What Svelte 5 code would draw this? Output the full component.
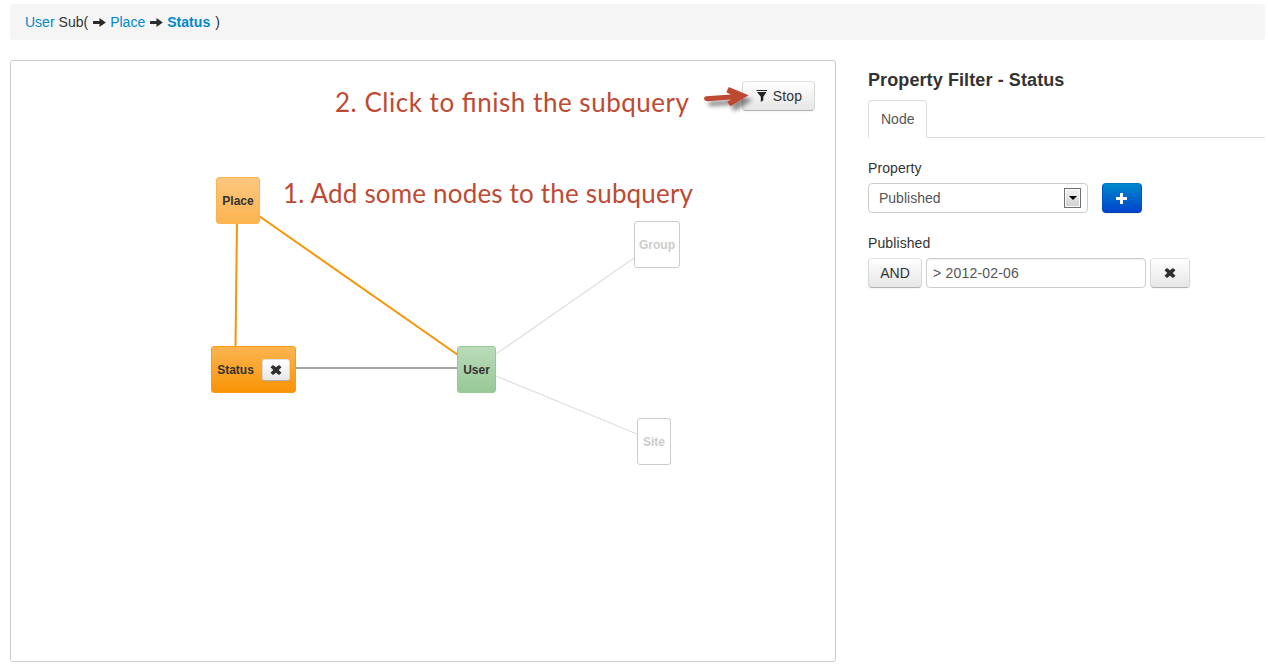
<script>
  const nodes = [
    { id: 'Place', kind: 'related', x: 216, y: 177, w: 44, h: 47 },
    { id: 'Status', kind: 'active', x: 211, y: 346, w: 85, h: 47, removable: true },
    { id: 'User', kind: 'root', x: 457, y: 346, w: 39, h: 47 },
    { id: 'Group', kind: 'muted', x: 634, y: 221, w: 46, h: 47 },
    { id: 'Site', kind: 'muted', x: 637, y: 418, w: 34, h: 47 }
  ];
  let property = $state('Published');
  let value = $state('> 2012-02-06');
</script>

{#snippet arrow()}
  <svg class="arrow" width="13" height="10" viewBox="0 0 13 10"><path d="M0.5 3H6.5V0L12.8 4.5L6.5 9V6H0.5Q0 6 0 5.5V3.5Q0 3 0.5 3Z" fill="#2b2b2b" /></svg>
{/snippet}

{#snippet cross()}
  <svg width="12" height="10" viewBox="0 0 12 10"><path d="M3 0L6 2.3L9 0L11.5 2.2L8.7 5L11.5 7.8L9 10L6 7.7L3 10L0.5 7.8L3.3 5L0.5 2.2Z" fill="#2f2f2f" /></svg>
{/snippet}

<div class="page">
  <nav class="crumbs">
    <a href="#user">User</a><span class="sub">Sub(</span>{@render arrow()}<a href="#place">Place</a>{@render arrow()}<a class="current" href="#status">Status</a><span class="close">)</span>
  </nav>

  <main>
    <section class="canvas">
      <svg class="edges" width="824" height="600" viewBox="11 61 824 600" fill="none">
        <path d="M237 223L235.5 347M259 216L458 355" stroke="#f89406" stroke-width="2" />
        <path d="M296 368H457" stroke="#a4a4a4" stroke-width="2" />
        <path d="M496 354L634 258M496 376L637 434" stroke="#dedede" stroke-width="1.2" />
      </svg>

      {#each nodes as n (n.id)}
        <div class="node {n.kind}" style="left:{n.x - 11}px;top:{n.y - 61}px;width:{n.w}px;height:{n.h}px">
          <span>{n.id}</span>
          {#if n.removable}<button class="btn mini" aria-label="Remove">{@render cross()}</button>{/if}
        </div>
      {/each}

      <button class="btn stop">
        <svg width="12" height="12" viewBox="0 0 12 12"><path d="M0.5 0H11V1H0.5ZM1 2H10.5L7.3 6.8V10.3L4.8 12V6.8Z" fill="#222" /></svg>
        Stop
      </button>

      <svg class="notes" width="824" height="600" viewBox="11 61 824 600">
        <defs>
          <filter id="shade" x="-20%" y="-50%" width="150%" height="250%"><feDropShadow dx="4" dy="5" stdDeviation="2" flood-color="#000" flood-opacity="0.45" /></filter>
        </defs>
        <text x="335" y="112" textLength="354">2. Click to finish the subquery</text>
        <text x="283" y="203" textLength="410">1. Add some nodes to the subquery</text>
        <path filter="url(#shade)" fill="#be4a33" d="M706 96.2L731 94.6L726.3 92.2L728.8 87L748.5 95.3L730.5 106.3L727 101.8L731 99.6L707 101.2Q704.3 101.2 704 98.8Q704 96.4 706 96.2Z" />
      </svg>
    </section>

    <aside>
      <h1>Property Filter - Status</h1>
      <div class="tabs"><div class="tab">Node</div></div>
      <div class="label">Property</div>
      <div class="row">
        <div class="select">
          <span>{property}</span>
          <i><svg width="8" height="4" viewBox="0 0 8 4"><path d="M0 0H8L4 4Z" fill="#000" /></svg></i>
        </div>
        <button class="btn primary" aria-label="Add"><svg width="12" height="12" viewBox="0 0 12 12"><path d="M4 1H7V5H11V8H7V12H4V8H0V5H4Z" fill="#fff" /></svg></button>
      </div>
      <div class="label second">Published</div>
      <div class="row">
        <button class="btn and">AND</button>
        <input bind:value aria-label="Published" />
        <button class="btn remove" aria-label="Remove filter">{@render cross()}</button>
      </div>
    </aside>
  </main>
</div>

<style>
  :global(body) { background: #fff; }
  .page {
    box-sizing: border-box;
    width: 1268px;
    height: 668px;
    padding: 4px 3px 0 10px;
    overflow: hidden;
    font: 14px/20px "Liberation Sans", Arial, sans-serif;
    color: #333;
  }
  .page :is(div, nav, button, input, section) { box-sizing: border-box; }
  svg { display: block; flex: none; }
  .crumbs {
    display: flex;
    align-items: center;
    height: 36px;
    padding: 0 15px;
    background: #f5f5f5;
    border-radius: 4px;
  }
  .crumbs a { color: #08c; text-decoration: none; }
  .crumbs .current { font-weight: bold; letter-spacing: 0.05px; }
  .sub { margin-left: 4px; }
  .arrow { margin: 1px 4.5px 0 4.5px; }
  .close { margin-left: 5px; }
  main { display: flex; gap: 32px; margin-top: 20px; }
  .canvas {
    position: relative;
    flex: none;
    width: 826px;
    height: 602px;
    border: 1px solid #ccc;
    border-radius: 3px;
  }
  .edges, .notes { position: absolute; inset: 0; pointer-events: none; }
  .notes text { font: 26px Lato, sans-serif; fill: #be4a33; }
  .node {
    position: absolute;
    display: flex;
    align-items: center;
    justify-content: center;
    gap: 8px;
    border: 1px solid;
    border-radius: 3px;
    font-size: 12px;
    font-weight: bold;
  }
  .related { background: linear-gradient(#fdc780, #fbb450); border-color: #fbb450; }
  .active { background: linear-gradient(#fbb450, #f89406); border-color: #f89a14; }
  .root { background: linear-gradient(#b9dbb9, #98c998); border-color: #95c895; }
  .muted { background: #fff; border-color: #ccc; color: #ccc; }
  .btn {
    display: flex;
    align-items: center;
    justify-content: center;
    height: 30px;
    padding: 0;
    border: 1px solid #ccc;
    border-color: #e2e2e2 #d9d9d9 #b3b3b3;
    border-radius: 4px;
    background: linear-gradient(#fff, #e6e6e6);
    box-shadow: 0 1px 2px rgba(0, 0, 0, 0.05);
    font: inherit;
    color: #333;
  }
  .mini { width: 28px; height: 22px; border-radius: 3px; }
  .stop { position: absolute; top: 20px; right: 20px; width: 73px; padding-left: 1px; gap: 5px; letter-spacing: 0.15px; }
  aside { flex: 1; min-width: 0; }
  h1 { margin: 10px 0; font-size: 18px; line-height: 20px; letter-spacing: 0.1px; }
  .tabs { display: flex; height: 38px; border-bottom: 1px solid #ddd; }
  .tab {
    width: 59px;
    height: 38px;
    padding: 8px 12px;
    border: 1px solid #ddd;
    border-bottom-color: #fff;
    border-radius: 4px 4px 0 0;
    background: #fff;
    color: #555;
  }
  .label { margin: 20px 0 5px; letter-spacing: 0.1px; }
  .row { display: flex; gap: 4px; height: 30px; }
  .select {
    display: flex;
    align-items: center;
    justify-content: space-between;
    width: 220px;
    margin-right: 10px;
    padding: 0 6px 0 10px;
    border: 1px solid #ccc;
    border-radius: 4px;
    color: #555;
  }
  .select i {
    display: flex;
    align-items: center;
    justify-content: center;
    box-sizing: border-box;
    width: 17px;
    height: 20px;
    border: 1px solid #707070;
    background: linear-gradient(#f2f2f2, #d0d0d0);
    box-shadow: inset 0 0 0 1px #fafafa;
  }
  .primary { width: 40px; border-color: #0077c0 #0055c4 #003eb0; background: linear-gradient(#08c, #04c); }
  .and { width: 54px; }
  .remove { width: 40px; }
  input {
    width: 220px;
    height: 30px;
    padding: 4px 6px;
    border: 1px solid #ccc;
    border-radius: 4px;
    box-shadow: inset 0 1px 1px rgba(0, 0, 0, 0.075);
    font: inherit;
    letter-spacing: 0.2px;
    color: #555;
  }
</style>
